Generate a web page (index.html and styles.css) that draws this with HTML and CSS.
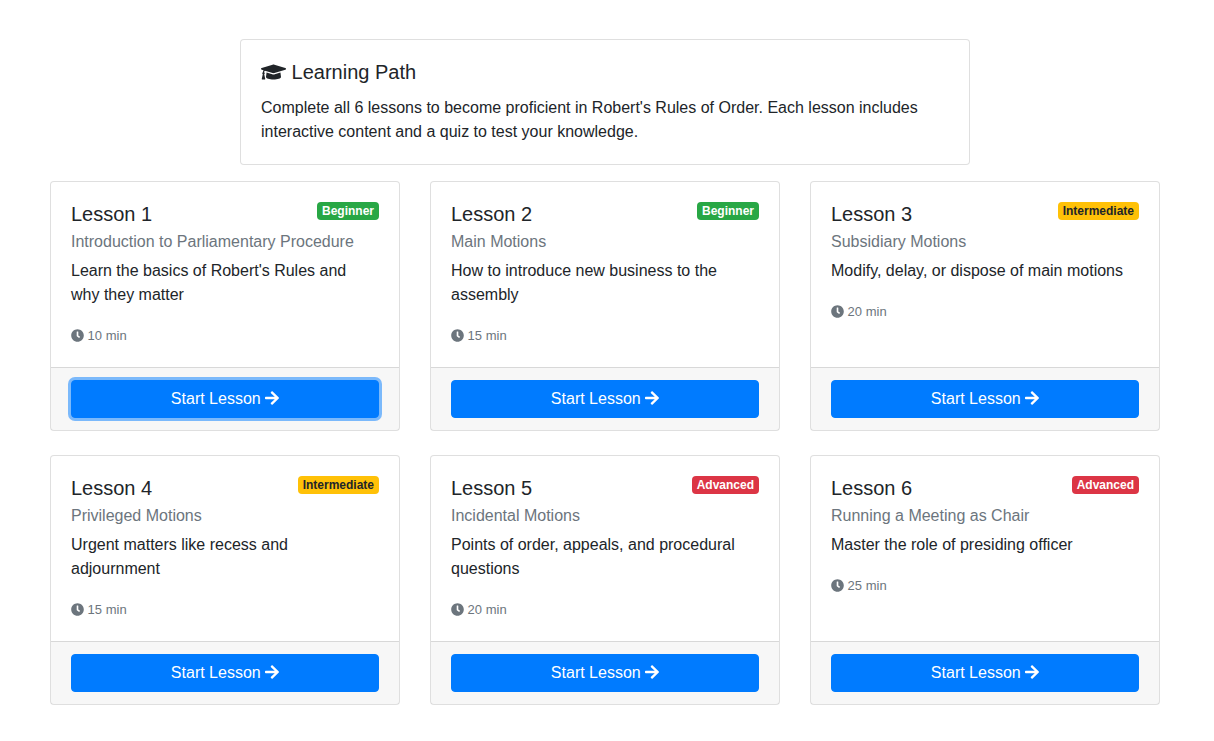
FILE: index.html
```
<!DOCTYPE html>
<html lang="en">
<head>
  <meta charset="UTF-8" />
  <meta name="viewport" content="width=device-width, initial-scale=1" />
  <title>Learning Path</title>
  <link rel="stylesheet" href="styles.css">
</head>
<body>

  <!-- Shared icons -->
  <svg class="icon-defs" aria-hidden="true">
    <symbol id="icon-cap" viewBox="0 0 640 512">
      <path d="M622.34 153.2L343.4 67.5c-15.2-4.67-31.6-4.67-46.79 0L17.66 153.2c-23.54 7.23-23.54 38.36 0 45.59l48.63 14.94c-10.67 13.19-17.23 29.28-17.88 46.9C38.78 266.15 32 276.11 32 288c0 10.78 5.68 19.85 13.86 25.65L20.33 428.53C18.11 438.52 25.71 448 35.94 448h56.11c10.24 0 17.84-9.48 15.62-19.47L82.14 313.65C90.32 307.85 96 298.78 96 288c0-11.57-6.47-21.25-15.66-26.87.76-15.02 8.44-28.3 20.69-36.72L296.6 284.5c9.06 2.78 26.44 6.25 46.79 0l278.95-85.7c23.55-7.24 23.55-38.36 0-45.6zM352.79 315.09c-28.53 8.76-52.84 3.92-65.59 0l-145.02-44.55L128 384c0 35.35 85.96 64 192 64s192-28.65 192-64l-14.18-113.47-145.03 44.56z"/>
    </symbol>
    <symbol id="icon-clock" viewBox="0 0 512 512">
      <path d="M256,8C119,8,8,119,8,256S119,504,256,504,504,393,504,256,393,8,256,8Zm92.49,313h0l-20,25a16,16,0,0,1-22.49,2.5h0l-67-49.72a40,40,0,0,1-15-31.23V112a16,16,0,0,1,16-16h32a16,16,0,0,1,16,16V256l58,42.5A16,16,0,0,1,348.49,321Z"/>
    </symbol>
    <symbol id="icon-arrow" viewBox="0 0 448 512">
      <path d="M190.5 66.9l22.2-22.2c9.4-9.4 24.6-9.4 33.9 0L441 239c9.4 9.4 9.4 24.6 0 33.9L246.6 467.3c-9.4 9.4-24.6 9.4-33.9 0l-22.2-22.2c-9.5-9.5-9.3-25 .4-34.3L311.4 296H24c-13.3 0-24-10.7-24-24v-32c0-13.3 10.7-24 24-24h287.4L190.9 101.2c-9.8-9.3-10-24.8-.4-34.3z"/>
    </symbol>
  </svg>

  <main class="container">

    <!-- Intro -->
    <section class="card intro">
      <div class="card-body">
        <h5 class="card-title"><svg class="icon icon-cap"><use href="#icon-cap"/></svg> Learning Path</h5>
        <p class="intro-text">Complete all 6 lessons to become proficient in Robert's Rules of Order. Each lesson includes interactive content and a quiz to test your knowledge.</p>
      </div>
    </section>

    <!-- Lessons -->
    <div class="lessons">
      <article class="card">
        <div class="card-body">
          <div class="card-head">
            <h5 class="card-title">Lesson 1</h5>
            <span class="badge badge-success">Beginner</span>
          </div>
          <h6 class="card-subtitle">Introduction to Parliamentary Procedure</h6>
          <p class="card-text">Learn the basics of Robert's Rules and why they matter</p>
          <p><small class="duration"><svg class="icon icon-clock"><use href="#icon-clock"/></svg> 10 min</small></p>
        </div>
        <div class="card-footer">
          <button type="button" class="btn focus">Start Lesson <svg class="icon icon-arrow"><use href="#icon-arrow"/></svg></button>
        </div>
      </article>

      <article class="card">
        <div class="card-body">
          <div class="card-head">
            <h5 class="card-title">Lesson 2</h5>
            <span class="badge badge-success">Beginner</span>
          </div>
          <h6 class="card-subtitle">Main Motions</h6>
          <p class="card-text">How to introduce new business to the assembly</p>
          <p><small class="duration"><svg class="icon icon-clock"><use href="#icon-clock"/></svg> 15 min</small></p>
        </div>
        <div class="card-footer">
          <button type="button" class="btn">Start Lesson <svg class="icon icon-arrow"><use href="#icon-arrow"/></svg></button>
        </div>
      </article>

      <article class="card">
        <div class="card-body">
          <div class="card-head">
            <h5 class="card-title">Lesson 3</h5>
            <span class="badge badge-warning">Intermediate</span>
          </div>
          <h6 class="card-subtitle">Subsidiary Motions</h6>
          <p class="card-text">Modify, delay, or dispose of main motions</p>
          <p><small class="duration"><svg class="icon icon-clock"><use href="#icon-clock"/></svg> 20 min</small></p>
        </div>
        <div class="card-footer">
          <button type="button" class="btn">Start Lesson <svg class="icon icon-arrow"><use href="#icon-arrow"/></svg></button>
        </div>
      </article>

      <article class="card">
        <div class="card-body">
          <div class="card-head">
            <h5 class="card-title">Lesson 4</h5>
            <span class="badge badge-warning">Intermediate</span>
          </div>
          <h6 class="card-subtitle">Privileged Motions</h6>
          <p class="card-text">Urgent matters like recess and adjournment</p>
          <p><small class="duration"><svg class="icon icon-clock"><use href="#icon-clock"/></svg> 15 min</small></p>
        </div>
        <div class="card-footer">
          <button type="button" class="btn">Start Lesson <svg class="icon icon-arrow"><use href="#icon-arrow"/></svg></button>
        </div>
      </article>

      <article class="card">
        <div class="card-body">
          <div class="card-head">
            <h5 class="card-title">Lesson 5</h5>
            <span class="badge badge-danger">Advanced</span>
          </div>
          <h6 class="card-subtitle">Incidental Motions</h6>
          <p class="card-text">Points of order, appeals, and procedural questions</p>
          <p><small class="duration"><svg class="icon icon-clock"><use href="#icon-clock"/></svg> 20 min</small></p>
        </div>
        <div class="card-footer">
          <button type="button" class="btn">Start Lesson <svg class="icon icon-arrow"><use href="#icon-arrow"/></svg></button>
        </div>
      </article>

      <article class="card">
        <div class="card-body">
          <div class="card-head">
            <h5 class="card-title">Lesson 6</h5>
            <span class="badge badge-danger">Advanced</span>
          </div>
          <h6 class="card-subtitle">Running a Meeting as Chair</h6>
          <p class="card-text">Master the role of presiding officer</p>
          <p><small class="duration"><svg class="icon icon-clock"><use href="#icon-clock"/></svg> 25 min</small></p>
        </div>
        <div class="card-footer">
          <button type="button" class="btn">Start Lesson <svg class="icon icon-arrow"><use href="#icon-arrow"/></svg></button>
        </div>
      </article>
    </div>
  </main>

</body>
</html>
```
FILE: styles.css
```
*, *::before, *::after {
  box-sizing: border-box;
}

body {
  margin: 0;
  padding: 39px 4px 24px 0;
  background: #fff;
  color: #212529;
  font-family: "Liberation Sans", Arial, sans-serif;
  font-size: 16px;
  line-height: 24px;
}

h5, h6, p {
  margin: 0;
  font-weight: normal;
}

.container {
  max-width: 1140px;
  margin: 0 auto;
  padding: 0 15px;
}

/* Icons */
.icon-defs {
  display: none;
}

.icon {
  fill: currentColor;
  vertical-align: -2px;
}

.icon-cap {
  width: 25px;
  height: 20px;
  vertical-align: -3px;
}

.icon-clock {
  width: 13px;
  height: 13px;
}

.icon-arrow {
  width: 14px;
  height: 16px;
}

/* Cards */
.card {
  display: flex;
  flex-direction: column;
  background: #fff;
  border: 1px solid rgba(0,0,0,0.125);
  border-radius: 4px;
}

.card-body {
  flex: 1;
  padding: 20px;
}

.card-head {
  display: flex;
  justify-content: space-between;
  align-items: flex-start;
}

.card-title {
  font-size: 20px;
  line-height: 24px;
}

.card-subtitle {
  margin-top: 6px;
  margin-bottom: 8px;
  font-size: 16px;
  line-height: 19px;
  color: #6c757d;
}

.card-text {
  margin-bottom: 16px;
}

.card-footer {
  padding: 12px 20px;
  background: rgba(0,0,0,0.03);
  border-top: 1px solid rgba(0,0,0,0.125);
}

.duration {
  font-size: 13px;
  line-height: 16px;
  color: #6c757d;
}

.intro {
  max-width: 730px;
  margin: 0 auto 16px;
}

.intro-text {
  margin-top: 12px;
}

.lessons {
  display: grid;
  grid-template-columns: repeat(3, 1fr);
  gap: 24px 30px;
}

/* Badges */
.badge {
  padding: 3px 5px;
  border-radius: 4px;
  font-size: 12px;
  font-weight: bold;
  line-height: 12px;
  white-space: nowrap;
  color: #fff;
}

.badge-success { background: #28a745; }
.badge-danger { background: #dc3545; }

.badge-warning {
  background: #ffc107;
  color: #212529;
}

/* Buttons */
.btn {
  display: block;
  width: 100%;
  padding: 6px 12px;
  border: 1px solid #007bff;
  border-radius: 4px;
  background: #007bff;
  color: #fff;
  font-family: inherit;
  font-size: 16px;
  line-height: 24px;
  text-align: center;
  cursor: pointer;
}

.btn:hover {
  background: #0069d9;
  border-color: #0062cc;
}

.btn:focus, .btn.focus {
  outline: 0;
  box-shadow: 0 0 0 3px rgba(0,123,255,0.5);
}

@media (max-width: 991px) {
  .lessons {
    grid-template-columns: repeat(2, 1fr);
  }
}

@media (max-width: 767px) {
  .lessons {
    grid-template-columns: 1fr;
  }
}
```
